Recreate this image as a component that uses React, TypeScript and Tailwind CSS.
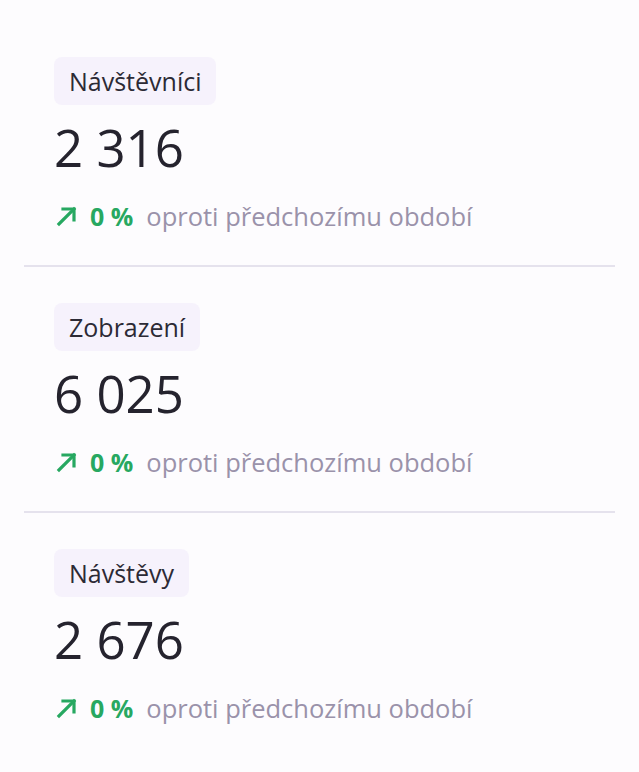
const stats = [
  { label: "Návštěvníci", value: "2 316", change: "0 %" },
  { label: "Zobrazení", value: "6 025", change: "0 %" },
  { label: "Návštěvy", value: "2 676", change: "0 %" },
];

function ArrowUp() {
  return (
    <svg
      width="22"
      height="22"
      viewBox="0 0 22 22"
      fill="none"
      stroke="currentColor"
      strokeWidth="3.2"
      strokeLinecap="square"
      className="shrink-0"
    >
      <path d="M3 19 L18 4" />
      <path d="M7 4 H18 V15" />
    </svg>
  );
}

export default function App() {
  return (
    <div
      className="min-h-screen bg-[#fdfcfe] px-6 pt-[21px] text-[#2c2a35]"
      style={{ fontFamily: '"Open Sans", "Noto Sans", sans-serif' }}
    >
      {stats.map((s, i) => (
        <div
          key={s.label}
          className={`px-[30px] pt-9 pb-[33px] ${
            i < stats.length - 1 ? "border-b-2 border-[#e5e2ed]" : ""
          }`}
        >
          <div className="inline-flex h-12 items-center rounded-lg bg-[#f6f2fc] px-[15px] text-[25px] leading-none">
            {s.label}
          </div>
          <div className="mt-3 text-[51px] leading-[60px] text-[#25232e]">
            {s.value}
          </div>
          <div className="mt-[23px] flex items-center text-[25px] leading-8">
            <span className="ml-[2px] text-[#27a861]">
              <ArrowUp />
            </span>
            <span className="ml-[12px] font-bold text-[#27a861]">{s.change}</span>
            <span className="ml-[13px] text-[25.5px] text-[#9a92aa]">
              oproti předchozímu období
            </span>
          </div>
        </div>
      ))}
    </div>
  );
}
